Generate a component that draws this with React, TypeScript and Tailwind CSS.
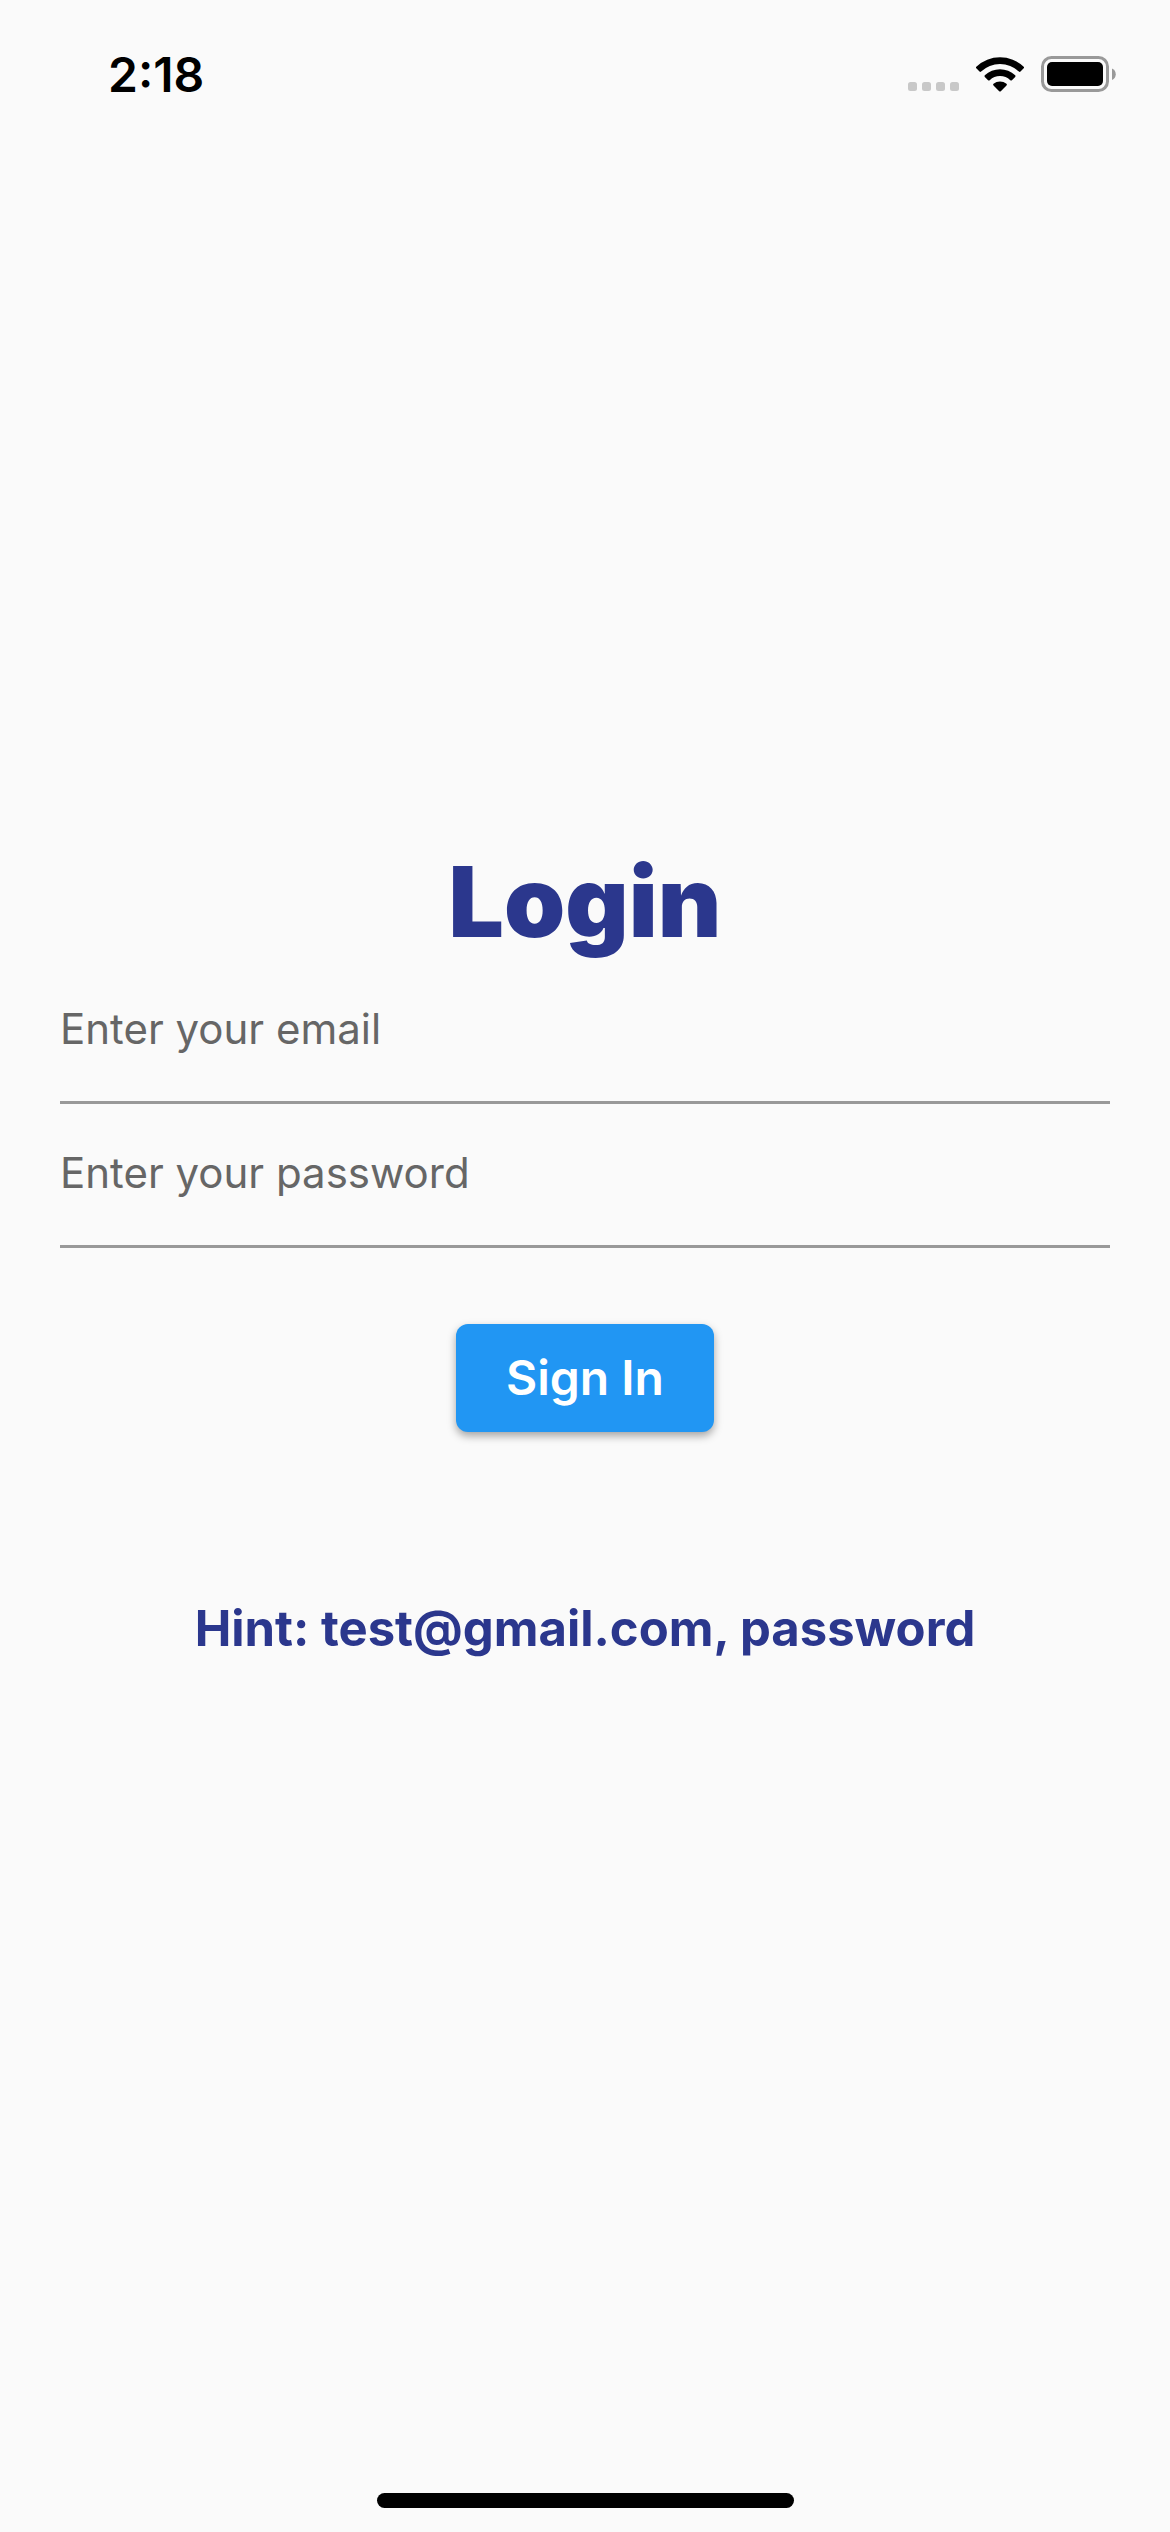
import React from 'react';

function StatusBar() {
  return (
    <header className="flex h-[141px] items-start justify-between pl-[108px] pr-[54px] pt-[49px] text-black">
      <time className="text-[48px] font-semibold leading-[52px]">2:18</time>
      <div className="flex h-[50px] items-center gap-4">
        <svg width="52" height="36" viewBox="0 0 52 36" fill="#c8c8c8" aria-hidden="true">
          <rect x="1" y="26" width="9" height="9" rx="2.500" />
          <rect x="15" y="26" width="9" height="9" rx="2.500" />
          <rect x="29" y="26" width="9" height="9" rx="2.500" />
          <rect x="43" y="26" width="9" height="9" rx="2.500" />
        </svg>
        <svg width="50" height="36" viewBox="0 0 50 36" aria-hidden="true">
          <path d="M1.300 10.700a34.500 34.500 0 0 1 47.400 0q.7.800 0 1.600l-3.200 3.300q-.8.700-1.600 0a27.500 27.500 0 0 0-37.800 0q-.8.700-1.600 0L1.300 12.300q-.7-.8 0-1.600z" />
          <path d="M9.800 19.300a22.300 22.300 0 0 1 30.400 0q.7.800 0 1.600l-3.300 3.300q-.8.700-1.600 0a15 15 0 0 0-20.600 0q-.8.700-1.600 0l-3.300-3.300q-.7-.8 0-1.600z" />
          <path d="M18.500 27.800a10.200 10.200 0 0 1 13 0q.9.800 0 1.700l-5.700 5.700q-.8.800-1.600 0l-5.700-5.700q-.9-.9 0-1.700z" />
        </svg>
        <svg width="75" height="36" viewBox="0 0 75 36" aria-hidden="true">
          <rect x="1.500" y="1.500" width="65" height="33" rx="9" fill="none" stroke="#999" strokeWidth="3" />
          <rect x="6" y="6" width="56" height="24" rx="5" />
          <path d="M71 12.500c5 2 5 9.500 0 11.500z" fill="#999" />
        </svg>
      </div>
    </header>
  );
}

function Field({ type, label }: { type: string; label: string }) {
  return (
    <div className="h-36 border-b-3 border-[#999] pt-8">
      <input type={type} aria-label={label} placeholder={label} className="h-[72px] w-full bg-transparent text-[42px] outline-none placeholder:text-[#666]" />
    </div>
  );
}

export default function App() {
  return (
    <div className="flex min-h-screen flex-col bg-[#fafafa] font-['Inter',sans-serif]">
      <StatusBar />
      <main className="flex flex-1 flex-col px-[60px] pt-[702px]">
        <h1 className="text-center text-[98px] font-black leading-[117px] text-[#2b378d]">Login</h1>
        <form className="flex flex-col" onSubmit={(e) => e.preventDefault()}>
          <Field type="email" label="Enter your email" />
          <Field type="password" label="Enter your password" />
          <button type="submit" className="mt-[76px] h-[108px] min-w-[258px] self-center rounded-xl bg-[#2196f3] px-12 text-[48px] font-semibold text-white shadow-[0_4px_8px_rgba(0,0,0,0.35)]">Sign In</button>
        </form>
        <p className="mt-[168px] text-center text-[49px] font-bold leading-[58px] text-[#2b378d]">Hint: test@gmail.com, password</p>
      </main>
      <footer className="flex h-[102px] items-end justify-center pb-6">
        <div className="h-[15px] w-[417px] rounded-full bg-black" />
      </footer>
    </div>
  );
}
